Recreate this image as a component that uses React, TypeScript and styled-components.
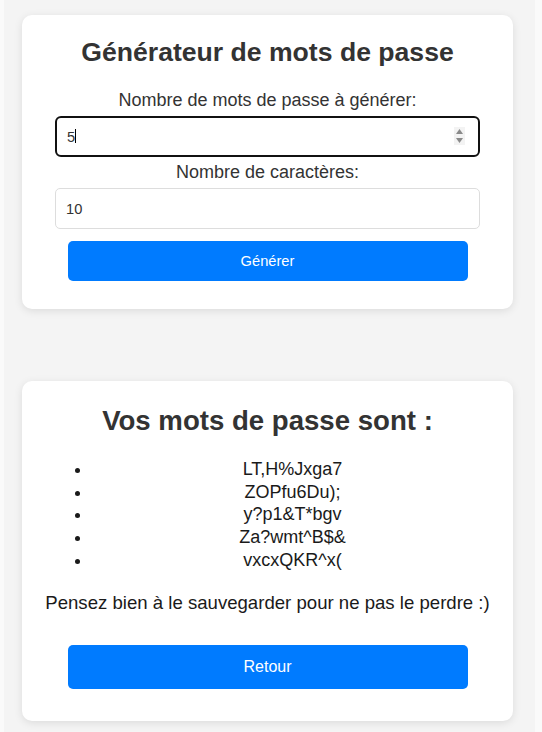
import React from "react";
import styled, { createGlobalStyle } from "styled-components";

const GlobalStyle = createGlobalStyle`
  html { background: #fafafa; }
  body {
    margin: 0;
    font-family: "Liberation Sans", Arial, sans-serif;
  }
  * { box-sizing: border-box; }
`;

const Page = styled.div`
  margin: 0 7px 0 4px;
  min-height: 732px;
  background: #f4f4f4;
  padding: 15px 0 12px 18px;
  display: flex;
  flex-direction: column;
  gap: 72px;
`;

const Card = styled.section<{ $top: number; $bottom: number }>`
  width: 491px;
  background: #ffffff;
  border-radius: 10px;
  box-shadow: 0 2px 8px rgba(0, 0, 0, 0.1);
  padding: ${(p) => p.$top}px 20px ${(p) => p.$bottom}px;
  display: flex;
  flex-direction: column;
  align-items: center;
`;

const Title = styled.h1<{ $size: number }>`
  margin: 0;
  font-size: ${(p) => p.$size}px;
  line-height: 32px;
  font-weight: 700;
  color: #333333;
  text-align: center;
`;

const Label = styled.label<{ $mt: number }>`
  display: block;
  margin: ${(p) => p.$mt}px 0 5px;
  font-size: 18px;
  line-height: 21px;
  color: #333333;
  text-align: center;
`;

const InputWrap = styled.div`
  position: relative;
  width: 425px;
`;

const Input = styled.input<{ $focused?: boolean }>`
  display: block;
  width: 100%;
  height: 41px;
  margin: 0;
  padding: 0 10px;
  font-family: "Liberation Sans", Arial, sans-serif;
  font-size: 14.67px;
  color: #333333;
  background: #ffffff;
  border: ${(p) => (p.$focused ? "2px solid #111111" : "1px solid #dddddd")};
  border-radius: ${(p) => (p.$focused ? "6px" : "5px")};
  outline: none;
`;

const Caret = styled.span`
  position: absolute;
  left: 20px;
  top: 13px;
  width: 1px;
  height: 14px;
  background: #000000;
`;

const Spinner = styled.span`
  position: absolute;
  right: 15px;
  top: 11px;
  width: 11px;
  height: 18px;
  background: #f3f3f3;
  display: flex;
  align-items: center;
  justify-content: center;
`;

const Button = styled.button<{ $height: number; $font: number; $mt: number }>`
  width: 400px;
  height: ${(p) => p.$height}px;
  margin-top: ${(p) => p.$mt}px;
  border: none;
  border-radius: 5px;
  background: #007bff;
  color: #ffffff;
  font-family: "Liberation Sans", Arial, sans-serif;
  font-size: ${(p) => p.$font}px;
  cursor: pointer;
`;

const List = styled.ul`
  align-self: stretch;
  margin: 21px 0 0;
  padding: 0 0 0 50px;
  list-style: disc outside;
`;

const Item = styled.li`
  font-size: 18px;
  line-height: 22.7px;
  color: #1a1a1a;
  text-align: center;
`;

const Note = styled.p`
  margin: 20px 0 0;
  font-size: 18.6px;
  line-height: 21px;
  color: #1a1a1a;
  text-align: center;
`;

const passwords = ["LT,H%Jxga7", "ZOPfu6Du);", "y?p1&T*bgv", "Za?wmt^B$&", "vxcxQKR^x("];

export default function App() {
  return (
    <>
      <GlobalStyle />
      <Page>
        <Card $top={21} $bottom={28}>
          <Title $size={26.6}>Générateur de mots de passe</Title>
          <Label $mt={22} htmlFor="count">Nombre de mots de passe à générer:</Label>
          <InputWrap>
            <Input id="count" $focused type="text" value="5" readOnly />
            <Caret />
            <Spinner>
              <svg width="9" height="16" viewBox="0 0 9 16">
                <path d="M4.5 1 L8 6 L1 6 Z" fill="#8a8a8a" />
                <path d="M4.5 15 L8 10 L1 10 Z" fill="#8a8a8a" />
              </svg>
            </Spinner>
          </InputWrap>
          <Label $mt={5} htmlFor="length">Nombre de caractères:</Label>
          <InputWrap>
            <Input id="length" type="text" value="10" readOnly />
          </InputWrap>
          <Button $height={40} $font={14.67} $mt={12}>Générer</Button>
        </Card>

        <Card $top={24} $bottom={32}>
          <Title $size={27.6}>Vos mots de passe sont :</Title>
          <List>
            {passwords.map((p) => (
              <Item key={p}>{p}</Item>
            ))}
          </List>
          <Note>Pensez bien à le sauvegarder pour ne pas le perdre :)</Note>
          <Button $height={44} $font={16} $mt={32}>Retour</Button>
        </Card>
      </Page>
    </>
  );
}
